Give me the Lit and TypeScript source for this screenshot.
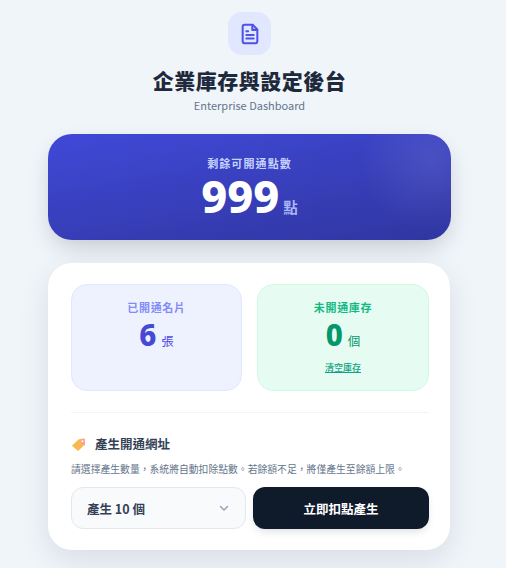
import { LitElement, html, css } from "lit";
import { customElement } from "lit/decorators.js";

const COMMA = "\uFF0C";

@customElement("app-root")
export class AppRoot extends LitElement {
  static styles = css`
    :host {
      display: block;
      height: 568px;
      overflow: hidden;
      background: #f0f5fa;
      font-family: "Noto Sans CJK TC", "Noto Sans", sans-serif;
      color: #0f1a2a;
    }
    .page {
      width: 403px;
      margin-left: 48px;
      display: flex;
      flex-direction: column;
      padding-top: 12px;
    }
    .head {
      display: flex;
      flex-direction: column;
      align-items: center;
    }
    .logo {
      width: 43px;
      height: 43px;
      border-radius: 14px;
      background: #e0e7ff;
      display: flex;
      align-items: center;
      justify-content: center;
    }
    .logo svg { width: 22px; height: 22px; }
    h1 {
      margin: 7px 0 0;
      font-size: 21px;
      line-height: 36px;
      font-weight: 900;
      letter-spacing: 0.5px;
      color: #1e293b;
    }
    .sub {
      font-size: 11px;
      line-height: 16px;
      margin-top: -1px;
      color: #64748b;
      font-weight: 400;
    }
    .hero {
      margin-top: 21px;
      height: 106px;
      border-radius: 24px;
      background:
        radial-gradient(circle at 95% 25%, rgba(255,255,255,0.09), rgba(255,255,255,0) 70px),
        linear-gradient(170deg, #4049d8 0%, #3036a0 100%);
      box-shadow: 0 10px 25px -5px rgba(15, 23, 42, 0.22);
      display: flex;
      flex-direction: column;
      align-items: center;
      color: #fff;
    }
    .hero-label {
      margin-top: 20px;
      font-size: 11px;
      line-height: 18px;
      font-weight: 700;
      letter-spacing: 1.1px;
      color: #c7d2fe;
    }
    .hero-val { display: flex; align-items: baseline; height: 46px; margin-top: 1px; }
    .hero-num {
      font-family: "Noto Sans", sans-serif;
      font-size: 45px;
      line-height: 46px;
      font-weight: 800;
    }
    .hero-unit {
      margin-left: 4px;
      font-size: 14.5px;
      font-weight: 700;
      color: #a9b6f8;
    }
    .card {
      margin-top: 23px;
      width: 402px;
      box-sizing: border-box;
      padding: 21px 21px 21px 23px;
      height: 287px;
      background: #fff;
      border-radius: 24px;
      box-shadow: 0 10px 30px rgba(15, 23, 42, 0.1);
      display: flex;
      flex-direction: column;
    }
    .stats {
      display: grid;
      grid-template-columns: 171px 172px;
      gap: 15px;
    }
    .stat {
      box-sizing: border-box;
      height: 107px;
      border-radius: 16px;
      border: 1px solid;
      display: flex;
      flex-direction: column;
      align-items: center;
      padding-top: 13px;
    }
    .stat.indigo { background: #eef2ff; border-color: #e0e7ff; }
    .stat.green { background: #e6fcf3; border-color: #d1fae5; }
    .stat-label {
      font-size: 11px;
      line-height: 18px;
      font-weight: 700;
      letter-spacing: 0.7px;
    }
    .indigo .stat-label { color: #818cf8; }
    .green .stat-label { color: #10b981; }
    .stat-val { display: flex; align-items: baseline; height: 36px; margin-top: 1px; }
    .stat-num {
      font-family: "Noto Sans", sans-serif;
      font-size: 29.5px;
      line-height: 36px;
      font-weight: 800;
    }
    .indigo .stat-num { color: #4549d6; }
    .green .stat-num { color: #059669; }
    .stat-unit { margin-left: 5px; font-size: 12.5px; font-weight: 400; }
    .indigo .stat-unit { color: #4f46e5; }
    .green .stat-unit { color: #059669; }
    .clear {
      margin-top: 8px;
      font-size: 9px;
      line-height: 14px;
      color: #10a37f;
      text-decoration: underline;
      font-weight: 500;
    }
    .divider { height: 1px; background: #f1f5f9; margin-top: 21px; }
    .gen-title {
      margin-top: 21px;
      display: flex;
      align-items: center;
      gap: 9px;
      font-size: 12.5px;
      line-height: 20px;
      font-weight: 700;
      color: #334155;
    }
    .gen-title svg { width: 15px; height: 15px; }
    .hint {
      margin-top: 7px;
      font-size: 9.82px;
      line-height: 16px;
      color: #64748b;
      white-space: nowrap;
    }
    .row {
      margin-top: 10px;
      display: grid;
      grid-template-columns: 175px 176px;
      gap: 7px;
    }
    .select {
      box-sizing: border-box;
      height: 42px;
      border-radius: 12px;
      border: 1px solid #e2e8f0;
      background: #f8fafc;
      display: flex;
      align-items: center;
      justify-content: space-between;
      padding: 0 15px;
      font-size: 12.5px;
      font-weight: 700;
      color: #334155;
    }
    .select svg { width: 12px; height: 12px; }
    .btn {
      height: 42px;
      border: 0;
      border-radius: 12px;
      background: #0f1a2a;
      color: #fff;
      font: inherit;
      font-size: 12.5px;
      font-weight: 700;
      box-shadow: 0 4px 8px -2px rgba(15, 23, 42, 0.15);
    }
  `;

  render() {
    return html`
      <div class="page">
        <div class="head">
          <div class="logo">
            <svg viewBox="0 0 24 24" fill="none" stroke="#4f52e5" stroke-width="2.2" stroke-linecap="round" stroke-linejoin="round">
              <path d="M15 2H6a2 2 0 0 0-2 2v16a2 2 0 0 0 2 2h12a2 2 0 0 0 2-2V7z"/>
              <path d="M14.5 2.5v5h5" />
              <path d="M8 9h2M8 13h8M8 17h8"/>
            </svg>
          </div>
          <h1>企業庫存與設定後台</h1>
          <div class="sub">Enterprise Dashboard</div>
        </div>

        <div class="hero">
          <div class="hero-label">剩餘可開通點數</div>
          <div class="hero-val">
            <span class="hero-num">999</span><span class="hero-unit">點</span>
          </div>
        </div>

        <div class="card">
          <div class="stats">
            <div class="stat indigo">
              <div class="stat-label">已開通名片</div>
              <div class="stat-val"><span class="stat-num">6</span><span class="stat-unit">張</span></div>
            </div>
            <div class="stat green">
              <div class="stat-label">未開通庫存</div>
              <div class="stat-val"><span class="stat-num">0</span><span class="stat-unit">個</span></div>
              <div class="clear">清空庫存</div>
            </div>
          </div>
          <div class="divider"></div>
          <div class="gen-title">
            <svg viewBox="0 0 16 16">
              <path d="M1 9.2 8 2.6 14.4 1.6 15 7.6 7.6 14.8z" fill="#f9b94e"/>
              <path d="M8 2.6 14.4 1.6 15 7.6 13.4 9.2 9.4 2.4z" fill="#f6a2a0"/>
              <circle cx="12.2" cy="4.4" r="1" fill="#fff"/>
            </svg>
            <span>產生開通網址</span>
          </div>
          <div class="hint">請選擇產生數量${COMMA}系統將自動扣除點數。若餘額不足${COMMA}將僅產生至餘額上限。</div>
          <div class="row">
            <div class="select">
              <span>產生 10 個</span>
              <svg viewBox="0 0 24 24" fill="none" stroke="#94a3b8" stroke-width="3" stroke-linecap="round" stroke-linejoin="round"><path d="m5 9 7 7 7-7"/></svg>
            </div>
            <button class="btn">立即扣點產生</button>
          </div>
        </div>
      </div>
    `;
  }
}
